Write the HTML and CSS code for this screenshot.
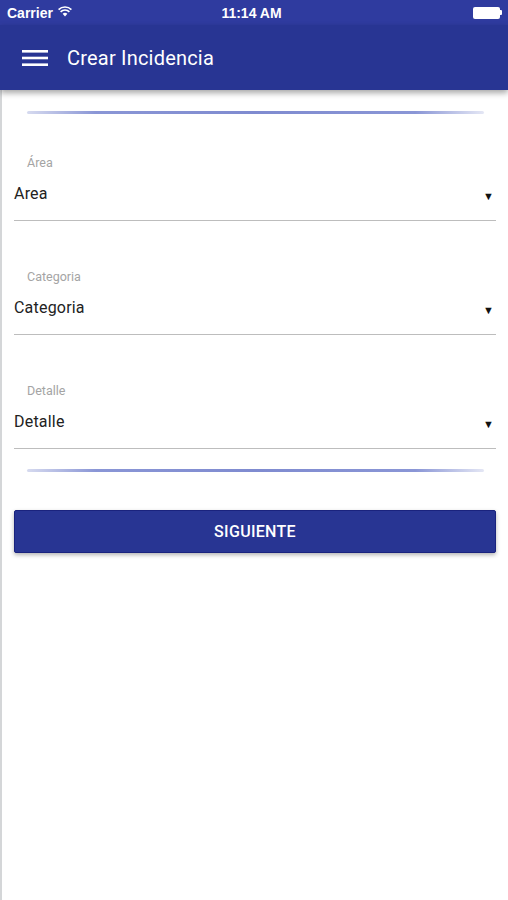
FILE: index.html
```html
<!DOCTYPE html>
<html>
<head>
<meta charset="utf-8">
<link rel="stylesheet" href="styles.css">
</head>
<body>
<div class="screen">
  <div class="status">
    <div class="carrier">Carrier
      <svg class="wifi" width="14" height="11" viewBox="0 0 14 11"><path d="M7 10.5 L4.6 7.8 A3.6 3.6 0 0 1 9.4 7.8 Z" fill="#fff"/><path d="M2.6 5.8 A6.3 6.3 0 0 1 11.4 5.8" stroke="#fff" stroke-width="1.7" fill="none"/><path d="M0.6 3.6 A9.2 9.2 0 0 1 13.4 3.6" stroke="#fff" stroke-width="1.7" fill="none"/></svg>
    </div>
    <div class="time">11:14 AM</div>
    <div class="battery"><span class="bat-body"></span><span class="bat-tip"></span></div>
  </div>
  <div class="appbar">
    <svg class="menu" width="26" height="18" viewBox="0 0 26 18"><rect x="0" y="1" width="26" height="2.6" fill="#fff"/><rect x="0" y="7.7" width="26" height="2.6" fill="#fff"/><rect x="0" y="14.4" width="26" height="2.6" fill="#fff"/></svg>
    <div class="title">Crear Incidencia</div>
  </div>
  <div class="content">
    <div class="divider"></div>
    <div class="field">
      <div class="label">Área</div>
      <div class="select"><span>Area</span><span class="arrow">▼</span></div>
    </div>
    <div class="field">
      <div class="label">Categoria</div>
      <div class="select"><span>Categoria</span><span class="arrow">▼</span></div>
    </div>
    <div class="field">
      <div class="label">Detalle</div>
      <div class="select"><span>Detalle</span><span class="arrow">▼</span></div>
    </div>
    <div class="divider second"></div>
    <button class="btn">SIGUIENTE</button>
  </div>
</div>
</body>
</html>
```
FILE: styles.css
```css
* { box-sizing: border-box; }
html, body { margin: 0; padding: 0; background: #fff; }
body { font-family: Roboto, "Liberation Sans", sans-serif; width: 508px; height: 900px; overflow: hidden; }
.screen { width: 508px; height: 900px; position: relative; border-left: 2px solid #d4d6d8; }
.status {
  height: 25px; background: #2f3b9f; color: #fff;
  display: flex; align-items: center; justify-content: space-between;
  padding: 0 6px 0 7px; margin-left: -2px; width: 508px;
  font-family: "Liberation Sans", Arial, sans-serif; font-weight: bold; font-size: 14px;
}
.carrier { display: flex; align-items: center; gap: 5px; width: 120px; }
.wifi { margin-top: -2px; }
.time { flex: 1; text-align: center; margin-left: -6px; }
.battery { width: 120px; display: flex; justify-content: flex-end; align-items: center; }
.bat-body { width: 27px; height: 12px; background: #fff; border-radius: 2px; }
.bat-tip { width: 2px; height: 5px; background: #fff; border-radius: 0 1px 1px 0; }
.appbar {
  height: 65px; background: #283593; display: flex; align-items: center;
  margin-left: -2px; width: 508px; padding: 0 0 0 22px;
  box-shadow: 0 3px 6px rgba(0,0,0,0.35); position: relative; z-index: 1;
}
.menu { display: block; }
.title { color: #fff; font-size: 20px; margin-left: 19px; font-weight: 400; letter-spacing: 0.2px; }
.content { padding: 21px 12px 0 12px; }
.divider {
  height: 3px; margin: 0 12px 0 13px;
  background: linear-gradient(90deg, rgba(121,134,203,0.3) 0%, #8a96d6 15%, #7f8bd0 50%, #8a96d6 85%, rgba(121,134,203,0.2) 100%);
  border-radius: 2px;
}
.field { height: 114px; padding-top: 41px; }
.field:first-of-type { height: 108px; padding-top: 42px; }
.label { color: #a4a4a4; font-size: 12.5px; padding-left: 13px; line-height: 16px; }
.select {
  display: flex; justify-content: space-between; align-items: center;
  font-size: 16px; color: #222; padding: 7px 0 0 0; height: 50px;
  border-bottom: 1.5px solid #bdbdbd; padding-bottom: 12px; letter-spacing: 0.2px;
}
.arrow { font-size: 11px; margin-right: 2px; margin-top: 6px; color: #111; }
.divider.second { margin-top: 13px; }
.btn {
  display: block; width: 100%; height: 43px; margin-top: 38px;
  background: #283593; color: #fff; border: 1px solid #1a237e; border-radius: 2px;
  font-family: Roboto, "Liberation Sans", sans-serif; font-size: 16px; font-weight: 500;
  letter-spacing: 0.3px; box-shadow: 0 2px 4px rgba(0,0,0,0.3);
}
```
